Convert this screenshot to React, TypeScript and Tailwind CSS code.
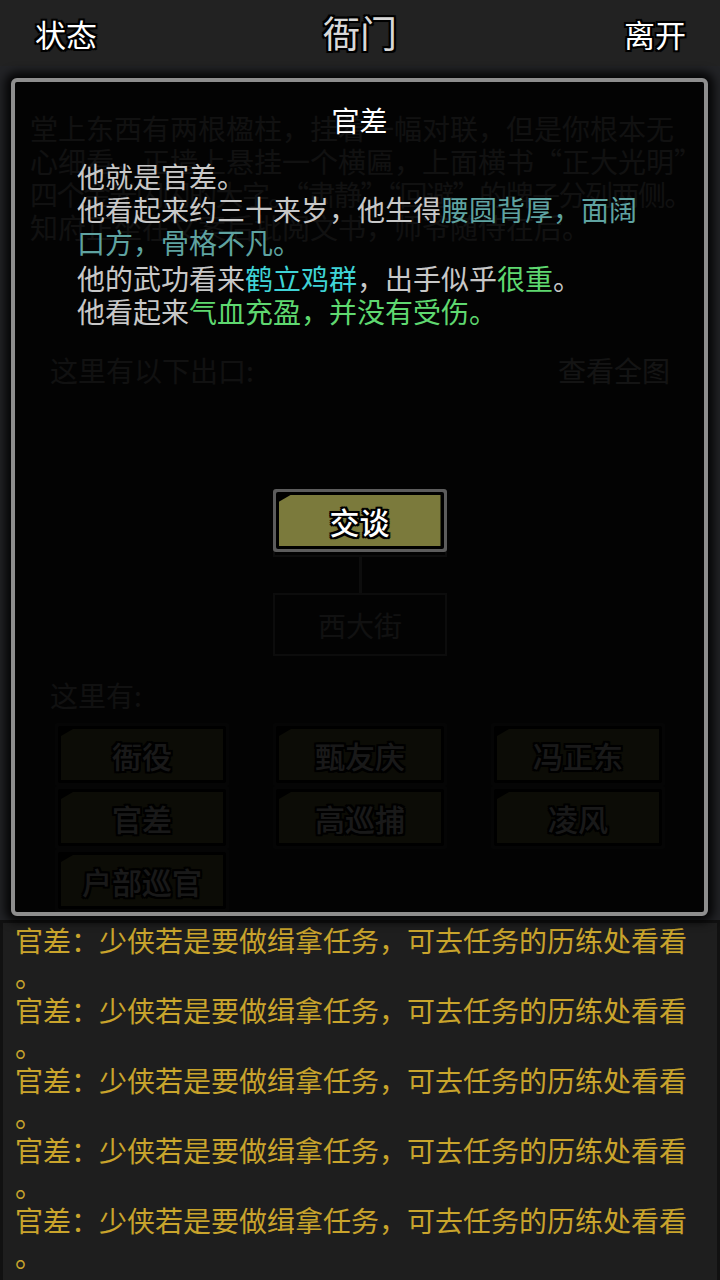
import React from "react";

const FONT = "font-['Noto_Sans_CJK_SC','Noto_Sans',sans-serif]";
const OUTLINE =
  "[text-shadow:2px_0_0_#000,-2px_0_0_#000,0_2px_0_#000,0_-2px_0_#000,2px_2px_0_#000,-2px_-2px_0_#000,2px_-2px_0_#000,-2px_2px_0_#000,0_0_3px_#000]";

function OliveButton({ label, faint }: { label: string; faint?: boolean }) {
  return (
    <div
      className={`flex h-[63px] w-[174px] rounded-[3px] p-[3px] ${
        faint ? "bg-[#3a3a3a]" : "bg-[#5c5c5c]"
      }`}
    >
      <div className="flex flex-1 rounded-[2px] bg-black p-[3px]">
        <div className="flex flex-1 items-center justify-center bg-[#7b7a3c] [clip-path:polygon(12px_0,100%_0,100%_100%,0_100%,0_7px)]">
          <span className={`text-[30px] font-medium leading-none text-white ${OUTLINE}`}>{label}</span>
        </div>
      </div>
    </div>
  );
}

function RoomBackground() {
  const npcs = ["衙役", "甄友庆", "冯正东", "官差", "高巡捕", "凌风", "户部巡官"];
  return (
    <div className="flex h-full flex-col bg-[#222326] px-[30px] pt-[46px] text-[#a8a8a8]">
      <div className="flex flex-col text-[28px] leading-[33px]">
        <div className="whitespace-nowrap">堂上东西有两根楹柱，挂着一幅对联，但是你根本无</div>
        <div className="whitespace-nowrap">心细看。正墙上悬挂一个横匾，上面横书“正大光明”</div>
        <div className="whitespace-nowrap tracking-[-1.5px]">四个金光闪闪的大字。“肃静”“回避”的牌子分列两侧。</div>
        <div className="whitespace-nowrap">知府正坐在文案后批阅文书，师爷随侍在后。</div>
      </div>
      <div className="mt-[110px] flex items-center justify-between px-[20px] text-[28px] leading-[33px]">
        <span>这里有以下出口:</span>
        <span className="text-[#c8c8c8]">查看全图</span>
      </div>
      <div className="mt-[105px] flex flex-col items-center">
        <div className="flex h-[65px] w-[174px] items-center justify-center border-2 border-[#888] text-[28px]">
          衙门
        </div>
        <div className="h-[36px] w-[3px] bg-[#888]" />
        <div className="flex h-[63px] w-[174px] items-center justify-center border-2 border-[#777] text-[28px] text-[#aaa]">
          西大街
        </div>
      </div>
      <div className="mt-[23px] px-[20px] text-[28px] leading-[33px]">这里有:</div>
      <div className="mt-[11px] grid grid-cols-[174px_174px_174px] justify-center gap-x-[44px]">
        {npcs.map((n) => (
          <OliveButton key={n} label={n} faint />
        ))}
      </div>
    </div>
  );
}

export default function App() {
  const logs = Array.from({ length: 5 });
  return (
    <div className={`flex h-[1280px] w-[720px] flex-col overflow-hidden bg-[#1e1e1e] ${FONT}`}>
      {/* Header */}
      <div className="relative flex h-[66px] shrink-0 items-center justify-between bg-[#222222] pl-[35px] pr-[34px]">
        <span className={`text-[31px] leading-none text-white ${OUTLINE}`}>状态</span>
        <span
          className={`absolute left-1/2 top-[32px] -translate-x-1/2 -translate-y-1/2 text-[37px] leading-none text-[#d8d8d8] ${OUTLINE}`}
        >
          衙门
        </span>
        <span className={`text-[31px] leading-none text-white ${OUTLINE}`}>离开</span>
      </div>

      {/* Room area with modal */}
      <div className="relative h-[854px] shrink-0">
        <RoomBackground />
        <div className="absolute bottom-[4px] left-[11px] right-[12px] top-[12px] flex flex-col items-center rounded-[6px] border-4 border-[#8e8e8e] bg-black/[0.9] shadow-[0_0_10px_6px_rgba(0,0,0,0.85)]">
          <div className="mt-[21px] text-[28px] leading-[34px] text-white">官差</div>
          <div className="mt-[23px] w-full px-[62px] text-[28px] leading-[33px] text-[#c8c8c8]">
            <p>他就是官差。</p>
            <p>
              他看起来约三十来岁，他生得
              <span className="text-[#5fa3a1]">腰圆背厚，面阔口方，骨格不凡。</span>
            </p>
            <p className="mt-[3px]">
              他的武功看来<span className="text-[#3fd3d6]">鹤立鸡群</span>，出手似乎
              <span className="text-[#5fd870]">很重</span>。
            </p>
            <p>
              他看起来<span className="text-[#5fd870]">气血充盈，并没有受伤。</span>
            </p>
          </div>
          <div className="mt-[161px]">
            <OliveButton label="交谈" />
          </div>
        </div>
      </div>

      {/* Log */}
      <div className="flex-1 border-x-[3px] border-t-[3px] border-[#111] bg-[#1e1e1e] px-[12px] pt-[0px] text-[28px] leading-[35px] text-[#c9a42c] [line-break:anywhere]">
        {logs.map((_, i) => (
          <p key={i}>官差：少侠若是要做缉拿任务，可去任务的历练处看看。</p>
        ))}
      </div>
    </div>
  );
}
